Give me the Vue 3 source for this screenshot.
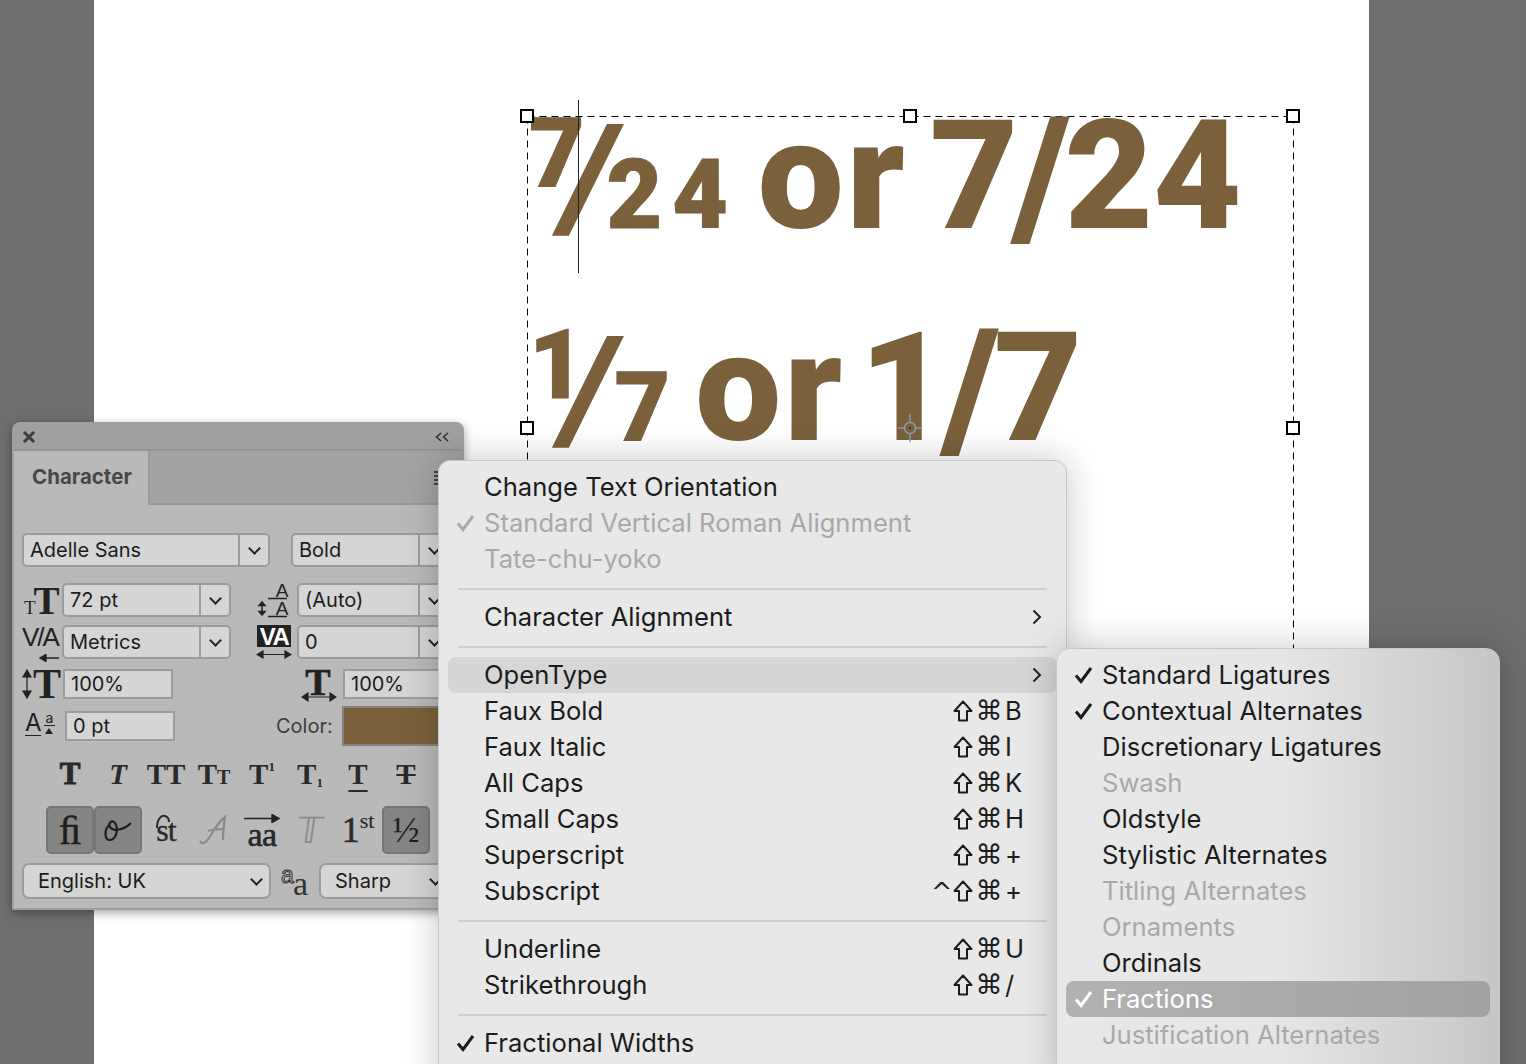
<template>
  <div class="desk">
    <div class="page"></div>

    <!-- text frame on the artboard -->
    <div class="frame">
      <svg class="frame-lines" width="768" height="626" viewBox="0 0 768 626">
        <path d="M0.5 0.5H767.5M0.5 0.5V625M766.5 0.5V625" fill="none" stroke="#000" stroke-width="1" stroke-dasharray="7 5" />
      </svg>
      <div class="story">
        <div class="line first">
          <span class="small num">7</span><span class="slash frac">/</span><span class="small den">24</span>
          <span class="word">or</span>
          <span class="plain">7<span class="slash whole">/</span>24</span>
        </div>
        <div class="line second">
          <span class="small num">1</span><span class="slash frac">/</span><span class="small den">7</span>
          <span class="word">or</span>
          <span class="plain">1<span class="slash whole">/</span>7</span>
        </div>
      </div>
      <i v-for="h in handles" :key="h" class="handle" :class="h"></i>
      <i class="cursor"></i>
      <svg class="anchor" width="28" height="28" viewBox="0 0 28 28">
        <path d="M14 0V8M14 20V28M2 14H8M20 14H26" stroke="#8d99ad" stroke-width="1.5" />
        <circle cx="14" cy="14" r="5.5" fill="none" stroke="#8d99ad" stroke-width="1.5" />
        <rect x="13" y="13" width="2" height="2" fill="#333" />
      </svg>
    </div>

    <!-- Character panel -->
    <section class="panel">
      <header class="titlebar">
        <svg width="14" height="14" viewBox="0 0 14 14"><path d="M2 2L12 12M12 2L2 12" stroke="#3c3c3c" stroke-width="3" /></svg>
        <svg class="collapse" width="16" height="12" viewBox="0 0 16 12"><path d="M7 2L2.5 6L7 10M14 2L9.5 6L14 10" fill="none" stroke="#333" stroke-width="1.6" /></svg>
      </header>
      <div class="tabs">
        <div class="tab">Character</div>
        <div class="tab-rest">
          <i class="burger"></i>
        </div>
      </div>
      <div class="body">
        <div class="row r1">
          <div class="sel w248"><span>Adelle Sans</span><b class="arrow"><i class="chev"></i></b></div>
          <div class="sel w159 ml21"><span>Bold</span><b class="arrow"><i class="chev"></i></b></div>
        </div>

        <div class="row r2">
          <div class="ico w40 tt"><span class="t-s">T</span><span class="t-l">T</span></div>
          <div class="sel w169"><span>72 pt</span><b class="arrow"><i class="chev"></i></b></div>
          <div class="ico w40 ml26 lead">
            <svg width="36" height="36" viewBox="0 0 36 36">
              <path d="M8 20V33M8 20L5 23.5H11ZM8 33L5 29.5H11Z" stroke="#222" stroke-width="1.5" fill="#222" />
              <path d="M14 16.5H33M14 34.5H33" stroke="#222" stroke-width="1.6" />
            </svg>
            <span class="lead-a top">A</span><span class="lead-a bot">A</span>
          </div>
          <div class="sel w153"><span>(Auto)</span><b class="arrow"><i class="chev"></i></b></div>
        </div>

        <div class="row r3">
          <div class="ico w40 va-k">
            <span>V/A</span>
            <svg width="20" height="8" viewBox="0 0 20 8"><path d="M20 4H4M7 0.5L1 4L7 7.5Z" fill="#222" stroke="#222" stroke-width="1.4" /></svg>
          </div>
          <div class="sel w169"><span>Metrics</span><b class="arrow"><i class="chev"></i></b></div>
          <div class="ico w40 ml26 va-t">
            <span class="va-box">VA</span>
            <svg width="36" height="9" viewBox="0 0 36 9"><path d="M4 4.5H32M7 1L1 4.5L7 8ZM29 1L35 4.5L29 8Z" fill="#222" stroke="#222" stroke-width="1.2" /></svg>
          </div>
          <div class="sel w153"><span>0</span><b class="arrow"><i class="chev"></i></b></div>
        </div>

        <div class="row r4">
          <div class="ico w41 vs">
            <svg width="10" height="30" viewBox="0 0 10 30"><path d="M5 3V27M1 8L5 1L9 8ZM1 22L5 29L9 22Z" fill="#222" stroke="#222" stroke-width="1.2" /></svg>
            <span>T</span>
          </div>
          <div class="inp w110">100%</div>
          <div class="ico w40 hs">
            <span>T</span>
            <svg width="36" height="10" viewBox="0 0 36 10"><path d="M4 5H32M7 1L1 5L7 9ZM29 1L35 5L29 9Z" fill="#222" stroke="#222" stroke-width="1.2" /></svg>
          </div>
          <div class="inp w107">100%</div>
        </div>

        <div class="row r5">
          <div class="ico w43 base">
            <span class="base-a">A</span>
            <span class="base-s">a</span>
            <svg width="10" height="14" viewBox="0 0 10 14"><path d="M5 5V14M1 6L5 0L9 6Z" fill="#222" /></svg>
          </div>
          <div class="inp w110">0 pt</div>
          <div class="color-label">Color:</div>
          <div class="swatch"></div>
        </div>

        <div class="tools styles">
          <span class="g heavy">T</span>
          <span class="g ital">T</span>
          <span class="g">TT</span>
          <span class="g">T<small>T</small></span>
          <span class="g">T<sup>1</sup></span>
          <span class="g">T<sub>1</sub></span>
          <span class="g"><u>T</u></span>
          <span class="g"><s>T</s></span>
        </div>

        <div class="tools features">
          <span class="btn on fi">ﬁ</span>
          <span class="btn on">
            <svg width="34" height="30" viewBox="0 0 34 30"><path d="M9 9C3 14 3 25 9 25C15 25 18 14 14 8C11 4 7 8 9 12C12 17 23 15 30 8" fill="none" stroke="#1e1e1e" stroke-width="2.2" /></svg>
          </span>
          <span class="btn st"><svg width="20" height="14" viewBox="0 0 20 14"><path d="M3 14C3 4 8 1 11 2C14 3 15 5 15 8" fill="none" stroke="#2a2a2a" stroke-width="2" /></svg>st</span>
          <span class="btn">
            <svg width="34" height="32" viewBox="0 0 34 32"><path d="M3 27C5 31 9 29 12 24C16 18 21 8 28 3C27 10 26 18 26 26M11 17C15 15 22 15 27 15" fill="none" stroke="#8a8a8a" stroke-width="2.2" /></svg>
          </span>
          <span class="btn aa"><svg width="36" height="9" viewBox="0 0 36 9"><path d="M0 4.5H30M28 0.5L35 4.5L28 8.5Z" fill="#222" stroke="#222" stroke-width="1.4" /></svg>aa</span>
          <span class="btn titling"><span>𝕋</span></span>
          <span class="btn ord">1<sup>st</sup></span>
          <span class="btn on half">½</span>
        </div>

        <div class="row r8">
          <div class="sel tall w249 plain-sel"><span>English: UK</span><i class="chev"></i></div>
          <div class="ico aliased"><span class="al-s">a</span><span class="al-l">a</span></div>
          <div class="sel tall w131 plain-sel"><span>Sharp</span><i class="chev"></i></div>
        </div>
      </div>
    </section>

    <!-- context menu -->
    <nav class="menu main">
      <template v-for="(item, i) in mainItems" :key="i">
        <div v-if="item.sep" class="sep"></div>
        <div v-else class="item" :class="{ off: item.off, hover: item.hover }">
          <span class="check">
            <svg v-if="item.check" width="19" height="18" viewBox="0 0 19 18"><path d="M2 9.5L7 15.5L17 2" fill="none" stroke="currentColor" stroke-width="3" /></svg>
          </span>
          <span class="label">{{ item.label }}</span>
          <span v-if="item.keys" class="keys">
            <span class="ctrl">{{ item.ctrl ? '^' : '' }}</span>
            <svg class="shift" width="20" height="22" viewBox="0 0 20 22"><path d="M10 1.5L18.5 11H14V20.5H6V11H1.5Z" fill="none" stroke="#1c1c1c" stroke-width="2" stroke-linejoin="round" /></svg>
            <span class="mod">⌘</span><span class="key">{{ item.keys }}</span>
          </span>
          <svg v-if="item.more" class="more" width="10" height="16" viewBox="0 0 10 16"><path d="M1.5 1.5L8 8L1.5 14.5" fill="none" stroke="#222" stroke-width="2" /></svg>
        </div>
      </template>
    </nav>

    <!-- OpenType submenu -->
    <nav class="menu sub">
      <div v-for="item in subItems" :key="item.label" class="item" :class="{ off: item.off, picked: item.picked }">
        <span class="check">
          <svg v-if="item.check" width="19" height="18" viewBox="0 0 19 18"><path d="M2 9.5L7 15.5L17 2" fill="none" stroke="currentColor" stroke-width="3" /></svg>
        </span>
        <span class="label">{{ item.label }}</span>
      </div>
    </nav>
  </div>
</template>

<script setup>
const handles = ['tl', 'tm', 'tr', 'ml', 'mr']

const mainItems = [
  { label: 'Change Text Orientation' },
  { label: 'Standard Vertical Roman Alignment', off: true, check: true },
  { label: 'Tate-chu-yoko', off: true },
  { sep: true },
  { label: 'Character Alignment', more: true },
  { sep: true },
  { label: 'OpenType', more: true, hover: true },
  { label: 'Faux Bold', keys: 'B' },
  { label: 'Faux Italic', keys: 'I' },
  { label: 'All Caps', keys: 'K' },
  { label: 'Small Caps', keys: 'H' },
  { label: 'Superscript', keys: '+' },
  { label: 'Subscript', keys: '+', ctrl: true },
  { sep: true },
  { label: 'Underline', keys: 'U' },
  { label: 'Strikethrough', keys: '/' },
  { sep: true },
  { label: 'Fractional Widths', check: true },
]

const subItems = [
  { label: 'Standard Ligatures', check: true },
  { label: 'Contextual Alternates', check: true },
  { label: 'Discretionary Ligatures' },
  { label: 'Swash', off: true },
  { label: 'Oldstyle' },
  { label: 'Stylistic Alternates' },
  { label: 'Titling Alternates', off: true },
  { label: 'Ornaments', off: true },
  { label: 'Ordinals' },
  { label: 'Fractions', check: true, picked: true },
  { label: 'Justification Alternates', off: true },
]
</script>

<style>
html, body { margin: 0; background: #6e6e6e; overflow: hidden; }
</style>

<style scoped>
.desk {
  position: relative;
  width: 1526px;
  height: 1064px;
  overflow: hidden;
  background: #6e6e6e;
  font-family: Inter, "Liberation Sans", sans-serif;
  color: #1c1c1c;
}
.page { position: absolute; left: 94px; top: 0; width: 1275px; height: 1064px; background: #fff; }

/* text frame */
.frame { position: absolute; left: 527px; top: 116px; width: 767px; height: 625px; }
.frame-lines { position: absolute; left: 0; top: 0; }
.story {
  position: absolute;
  left: 8px;
  top: -27px;
  font-family: Roboto, "Liberation Sans", sans-serif;
  font-weight: 900;
  color: #7a613c;
  white-space: nowrap;
}
.line { position: absolute; left: 0; height: 160px; line-height: 160px; font-size: 153px; display: flex; align-items: baseline; }
.first { top: 0; }
.second { top: 212px; }
.small { font-size: 96px; letter-spacing: 10px; -webkit-text-stroke: 1px #7a613c; }
.num { position: relative; top: -42px; margin-left: -6px; letter-spacing: 0; }
.slash { display: inline-block; font-size: 165px; line-height: 1; }
.slash.frac { font-size: 145px; margin: 0 -8px 0 -21px; transform: skewX(-10deg) translateY(-1px); }
.slash.whole { margin: 0 -6px; transform: translateY(6px); }
.word { margin-left: 20px; letter-spacing: 3px; }
.plain { margin-left: 22px; }
.second .den { margin-left: 8px; }
.second .word { margin-left: 15px; }
.second .plain { margin-left: 14px; }

.handle { position: absolute; width: 10px; height: 10px; background: #fff; border: 2px solid #000; }
.tl { left: -7px; top: -7px; }
.tm { left: 376px; top: -7px; }
.tr { left: 759px; top: -7px; }
.ml { left: -7px; top: 305px; }
.mr { left: 759px; top: 305px; }
.cursor { position: absolute; left: 51px; top: -16px; width: 1px; height: 173px; background: #222; }
.anchor { position: absolute; left: 369px; top: 298px; }

/* panel */
.panel {
  position: absolute;
  left: 12px;
  top: 422px;
  width: 452px;
  height: 488px;
  box-sizing: border-box;
  border: 2px solid #a0a0a0;
  border-radius: 8px 8px 2px 2px;
  background: #b9b9b9;
  box-shadow: 0 3px 10px rgba(0, 0, 0, 0.35);
  overflow: hidden;
  font-size: 20px;
}
.titlebar {
  height: 25px;
  background: #a0a0a0;
  border-bottom: 2px solid #959595;
  display: flex;
  align-items: center;
  justify-content: space-between;
  padding: 0 12px 0 8px;
}
.tabs { display: flex; height: 54px; }
.tab {
  width: 136px;
  box-sizing: border-box;
  padding: 13px 0 0 18px;
  font-size: 20.5px;
  font-weight: 700;
  color: #484848;
  background: #b9b9b9;
  border-right: 2px solid #9a9a9a;
}
.tab-rest { flex: 1; background: #a3a3a3; border-bottom: 2px solid #999; position: relative; }
.burger { position: absolute; right: 18px; top: 20px; width: 10px; height: 14px; background: repeating-linear-gradient(#444 0 2px, transparent 2px 4px); }

.body { padding: 28px 0 0 8px; }
.row { display: flex; align-items: center; }
.r2 { margin-top: 16px; }
.r3 { margin-top: 8px; }
.r4 { margin-top: 10px; height: 30px; }
.r5 { margin-top: 12px; height: 30px; }
.r8 { margin-top: 9px; }

.sel {
  height: 34px;
  box-sizing: border-box;
  flex: none;
  display: flex;
  align-items: center;
  justify-content: space-between;
  background: #d5d5d5;
  border: 2px solid #9c9c9c;
  border-radius: 5px;
  padding-left: 6px;
}
.sel.tall { height: 36px; border-radius: 7px; padding: 0 8px 0 14px; }
.arrow { width: 28px; height: 100%; flex: none; border-left: 2px solid #9c9c9c; display: flex; align-items: center; justify-content: center; }
.chev { display: block; width: 7px; height: 7px; margin-top: -3px; border-right: 2px solid #222; border-bottom: 2px solid #222; transform: rotate(45deg); }
.w248 { width: 248px; }
.w159 { width: 159px; }
.w169 { width: 169px; }
.w153 { width: 153px; }
.w249 { width: 249px; }
.w131 { width: 131px; }
.w110 { width: 110px; }
.w107 { width: 107px; }
.w40 { width: 40px; }
.w41 { width: 41px; }
.w43 { width: 43px; }
.ml21 { margin-left: 21px; }
.ml26 { margin-left: 26px; }

.ico { position: relative; flex: none; box-sizing: border-box; height: 34px; font-family: "Liberation Serif", serif; color: #222; }
.tt { display: flex; align-items: baseline; padding-left: 2px; }
.tt .t-s { font-size: 19px; line-height: 36px; }
.tt .t-l { font-size: 39px; line-height: 36px; font-weight: 700; margin-left: -2px; }
.lead svg { position: absolute; left: -3px; top: -1px; }
.lead-a { position: absolute; left: 14px; width: 22px; text-align: center; font: 19px/15px "Liberation Sans", sans-serif; }
.lead-a.top { top: 0; }
.lead-a.bot { top: 18px; }
.va-k { font: 26px/30px "Liberation Sans", sans-serif; letter-spacing: -2px; }
.va-k span { display: block; margin-top: -3px; }
.va-k svg { position: absolute; left: 17px; top: 29px; }
.va-box { display: block; width: 34px; height: 22px; background: #222; color: #fff; font: 700 24px/23px "Liberation Sans", sans-serif; letter-spacing: -1.5px; text-align: center; }
.va-t svg { position: absolute; left: -1px; top: 25px; }
.vs { display: flex; align-items: center; height: 30px; }
.vs span { font-size: 42px; line-height: 30px; font-weight: 700; margin-left: 1px; }
.hs { margin-left: 130px; height: 30px; }
.hs span { display: block; font-size: 38px; line-height: 26px; font-weight: 700; text-align: center; margin-left: -2px; width: 34px; -webkit-text-stroke: 0.6px #222; }
.hs svg { position: absolute; left: -2px; top: 23px; }
.base { height: 30px; font-family: Inter, "Liberation Sans", sans-serif; }
.base-a { position: absolute; left: 3px; top: 0; width: 16px; text-align: center; font-size: 24px; line-height: 24px; border-bottom: 1.5px solid #222; }
.base-s { position: absolute; left: 22px; top: 0; width: 11px; font-size: 14px; line-height: 14px; text-align: center; border-bottom: 1.5px solid #222; }
.base svg { position: absolute; left: 22px; top: 17px; }

.inp {
  box-sizing: border-box;
  flex: none;
  height: 30px;
  line-height: 26px;
  padding-left: 6px;
  background: #d5d5d5;
  border: 2px solid #9c9c9c;
}
.color-label { margin-left: 101px; width: 66px; flex: none; color: #3e3e3e; }
.swatch { width: 108px; height: 40px; flex: none; box-sizing: border-box; background: #7a613c; border: 2px solid #8a8178; }

.tools { display: grid; grid-template-columns: repeat(8, 48px); margin-left: 24px; font-family: "Liberation Serif", serif; color: #2a2a2a; }
.styles { margin-top: 15px; height: 36px; }
.features { margin-top: 14px; height: 48px; }
.g { display: flex; justify-content: center; align-items: baseline; font-size: 29px; line-height: 36px; font-weight: 700; }
.g small { font-size: 20px; font-weight: 700; }
.g sup { font-size: 13px; line-height: 0; position: relative; top: -13px; vertical-align: baseline; }
.g sub { font-size: 13px; line-height: 0; position: relative; top: 3px; vertical-align: baseline; }
.g u { text-decoration-thickness: 2px; text-underline-offset: 6px; }
.heavy { font-size: 31px; -webkit-text-stroke: 1px #2a2a2a; }
.ital { font-style: italic; font-weight: 700; }

.btn { position: relative; box-sizing: border-box; display: flex; align-items: center; justify-content: center; height: 48px; font-size: 36px; }
.btn.on { background: #858585; border: 2px solid #767676; border-radius: 5px; color: #1e1e1e; }
.fi { font-weight: 400; font-size: 40px; -webkit-text-stroke: 0.5px #1e1e1e; }
.st { font-size: 32px; font-weight: 400; letter-spacing: -1px; -webkit-text-stroke: 0.4px #2a2a2a; }
.st svg { position: absolute; left: 12px; top: 8px; }
.aa { padding-top: 10px; font-size: 34px; font-weight: 400; letter-spacing: -0.5px; -webkit-text-stroke: 0.6px #222; }
.aa svg { position: absolute; left: 6px; top: 8px; }
.titling { color: #8c8c8c; font-family: "DejaVu Sans", serif; font-size: 36px; }
.titling span { display: block; transform: skewX(-8deg); }
.ord { font-size: 36px; font-weight: 400; -webkit-text-stroke: 0.6px #2a2a2a; }
.ord sup { font-size: 22px; font-weight: 400; -webkit-text-stroke: 0.2px #2a2a2a; line-height: 0; position: relative; top: -9px; vertical-align: baseline; }
.half { font-size: 36px; }

.aliased { margin: 0 12px 0 10px; width: 26px; height: 36px; font-family: "Liberation Sans", sans-serif; }
.al-s { position: absolute; left: 0; top: 0; font-size: 23px; line-height: 24px; color: transparent; -webkit-text-stroke: 1px #333; }
.al-l { position: absolute; left: 12px; top: 6px; font-family: "Liberation Serif", serif; font-size: 34px; line-height: 30px; color: #333; }

/* menus */
.menu {
  position: absolute;
  box-sizing: border-box;
  font-size: 25.6px;
  border: 1px solid #c8c8c8;
  box-shadow: 0 0 36px rgba(0, 0, 0, 0.22);
}
.main {
  left: 438px;
  top: 460px;
  width: 629px;
  height: 640px;
  padding: 8px 9px;
  border-radius: 12px;
  background: #e8e8e8;
}
.sub {
  left: 1056px;
  top: 648px;
  width: 444px;
  height: 440px;
  padding: 8px 9px;
  border-radius: 14px;
  background: linear-gradient(90deg, #e8e8e8 0, #e6e6e6 50%, #c6c6c6 100%);
}
.item { height: 36px; display: flex; align-items: center; white-space: nowrap; border-radius: 8px; }
.item.off { color: #a9a9a9; }
.item.hover { background: #d6d6d6; }
.item.picked { color: #fff; background: linear-gradient(90deg, #b2b2b2, #a2a2a2); }
.label { margin-top: -2px; }
.check { width: 36px; flex: none; display: flex; padding-left: 8px; box-sizing: border-box; }
.keys { margin-left: auto; padding-right: 30px; display: flex; align-items: center; }
.ctrl { width: 22px; font-family: "DejaVu Sans", sans-serif; }
.mod { width: 28px; margin: 0 2px 0 2px; text-align: center; font-family: "DejaVu Sans", sans-serif; font-size: 27px; line-height: 30px; }
.key { width: 22px; margin-top: -2px; }
.more { margin-left: auto; margin-right: 15px; }
.sep { height: 2px; margin: 11px 10px 9px; background: #cfcfcf; }
</style>
